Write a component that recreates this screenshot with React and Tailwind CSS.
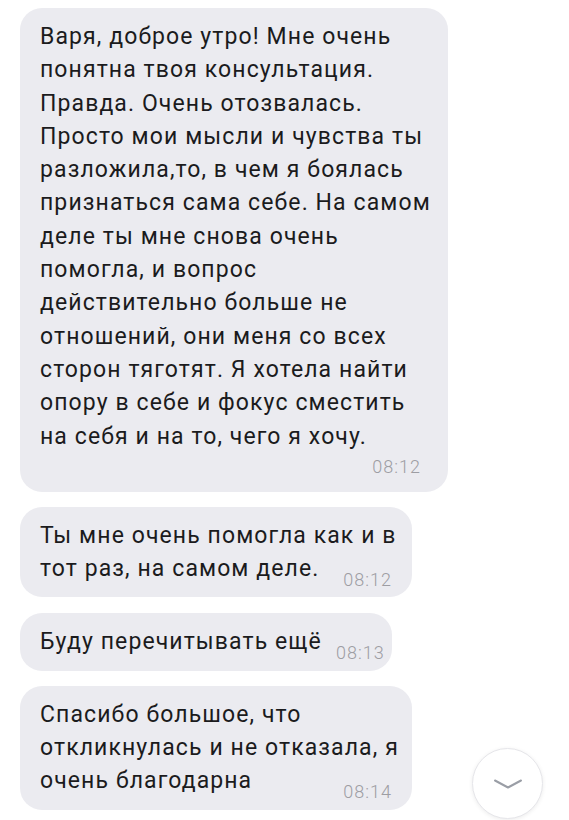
const font = { fontFamily: "Roboto, 'Noto Sans', sans-serif" };

function Time({ children, inline }) {
  if (inline) {
    return (
      <span className="relative top-[11px] ml-[14px] shrink-0 text-[18px] font-light tracking-[1px] text-[#9d9da3]">
        {children}
      </span>
    );
  }
  return (
    <div className="mr-[7px] text-right text-[18px] leading-[27px] font-light tracking-[1px] text-[#9d9da3]">
      {children}
    </div>
  );
}

function Bubble({ width, lines, time, inline }) {
  return (
    <div
      className="rounded-[22px] bg-[#ebebf0] px-[20px] pt-[12px] pb-[12px] text-[23px] leading-[33.3px] tracking-[1.1px] text-[#1b1b1d]"
      style={{ width }}
    >
      <div>
        {lines.map((line, i) =>
          inline && i === lines.length - 1 ? (
            <div key={i} className="flex justify-between whitespace-nowrap">
              <span>{line}</span>
              <Time inline>{time}</Time>
            </div>
          ) : (
            <div key={i} className="whitespace-nowrap">
              {line}
            </div>
          )
        )}
      </div>
      {!inline && <Time>{time}</Time>}
    </div>
  );
}

export default function App() {
  return (
    <div className="relative h-[820px] w-[569px] overflow-hidden bg-white" style={font}>
      <div className="flex flex-col gap-[15px] px-[20px] pt-[8px]">
        <Bubble
          width={428}
          time="08:12"
          lines={[
            "Варя, доброе утро! Мне очень",
            "понятна твоя консультация.",
            "Правда. Очень отозвалась.",
            "Просто мои мысли и чувства ты",
            "разложила,то, в чем я боялась",
            "признаться сама себе. На самом",
            "деле ты мне снова очень",
            "помогла, и вопрос",
            "действительно больше не",
            "отношений, они меня со всех",
            "сторон тяготят. Я хотела найти",
            "опору в себе и фокус сместить",
            "на себя и на то, чего я хочу.",
          ]}
        />
        <Bubble
          width={392}
          time="08:12"
          inline
          lines={["Ты мне очень помогла как и в", "тот раз, на самом деле."]}
        />
        <div className="mt-[1px]">
          <Bubble width={372} time="08:13" inline lines={["Буду перечитывать ещё"]} />
        </div>
        <Bubble
          width={392}
          time="08:14"
          inline
          lines={["Спасибо большое, что", "откликнулась и не отказала, я", "очень благодарна"]}
        />
      </div>

      {/* scroll down button */}
      <button className="absolute top-[748px] left-[472px] flex h-[71px] w-[71px] items-center justify-center rounded-full border border-[#e6e6ea] bg-white shadow-[0_1px_4px_rgba(0,0,0,0.08)]">
        <svg width="28" height="10" viewBox="0 0 28 10" fill="none">
          <path d="M1 1.5 L14 8.5 L27 1.5" stroke="#9a9ea6" strokeWidth="2" strokeLinecap="round" strokeLinejoin="round" />
        </svg>
      </button>
    </div>
  );
}
